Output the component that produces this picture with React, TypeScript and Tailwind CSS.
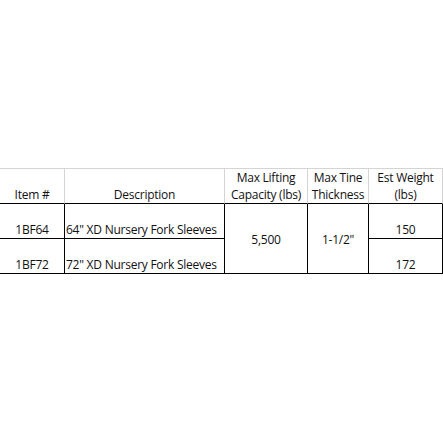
import React from "react";

export default function App() {
  const hdr =
    "border-t border-r border-b border-t-[#d4d4d4] border-r-[#d4d4d4] border-b-black flex flex-col items-center justify-end text-center leading-[17px] whitespace-nowrap";
  const cell = "border-r border-b border-black flex leading-[17px] whitespace-nowrap";
  return (
    <div
      className="w-[443px] h-[443px] bg-white pt-[168px] text-[#111]"
      style={{ fontFamily: "'Open Sans', 'Liberation Sans', sans-serif" }}
    >
      <div className="grid grid-cols-[65px_160px_83px_61px_74px] grid-rows-[36px_35px_35px] text-[12px] tracking-[-0.25px]">
        <div className={hdr}>
          <span>Item #</span>
        </div>
        <div className={hdr}>
          <span>Description</span>
        </div>
        <div className={hdr}>
          <span>Max Lifting</span>
          <span>Capacity (lbs)</span>
        </div>
        <div className={hdr}>
          <span>Max Tine</span>
          <span>Thickness</span>
        </div>
        <div className={hdr}>
          <span>Est Weight</span>
          <span>(lbs)</span>
        </div>

        <div className={`${cell} items-end justify-center`}>1BF64</div>
        <div className={`${cell} items-end justify-start pl-[1px]`}>
          64" XD Nursery Fork Sleeves
        </div>
        <div className={`${cell} row-span-2 items-center justify-center pt-[2px]`}>5,500</div>
        <div className={`${cell} row-span-2 items-center justify-center pt-[2px]`}>1-1/2"</div>
        <div className={`${cell} items-end justify-center`}>150</div>

        <div className={`${cell} items-end justify-center`}>1BF72</div>
        <div className={`${cell} items-end justify-start pl-[1px]`}>
          72" XD Nursery Fork Sleeves
        </div>
        <div className={`${cell} items-end justify-center`}>172</div>
      </div>
    </div>
  );
}
